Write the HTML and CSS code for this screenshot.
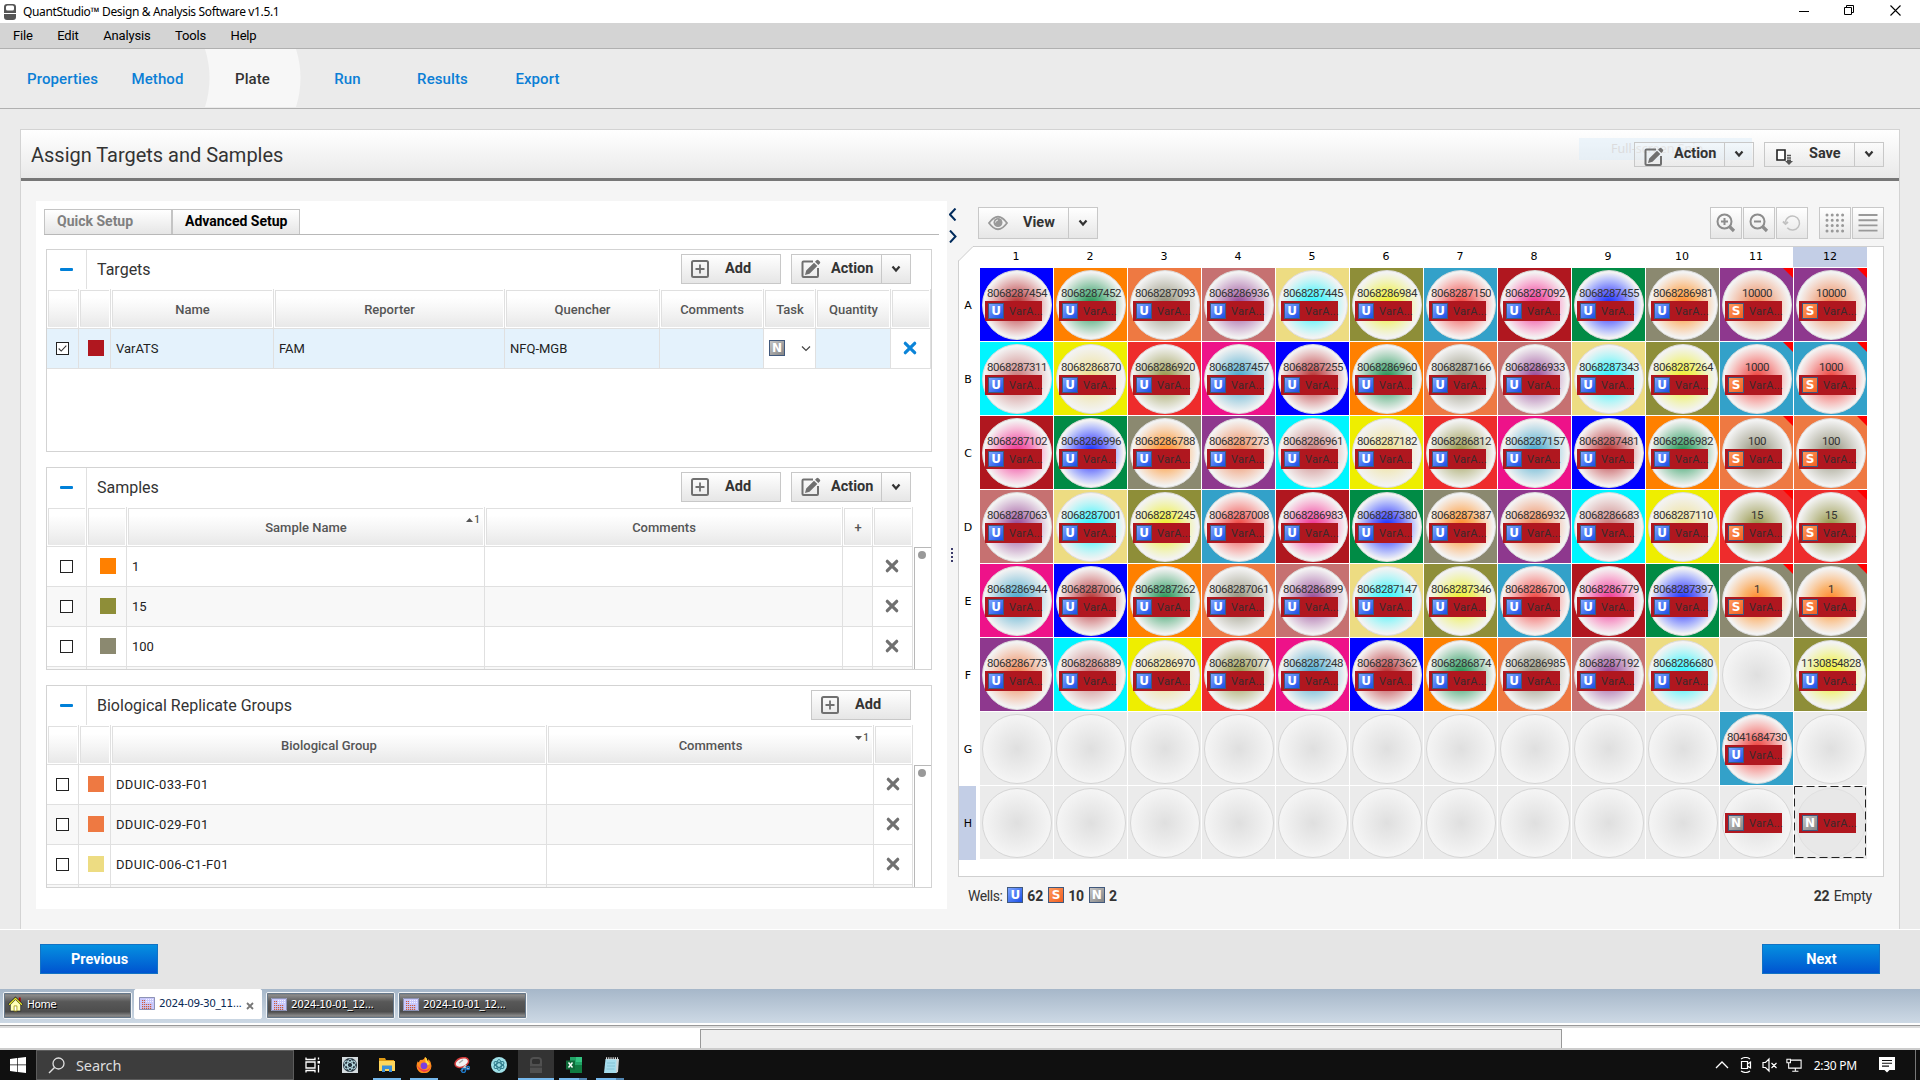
FILE: index.html
```html
<!DOCTYPE html>
<html lang="en">
<head>
<meta charset="utf-8">
<title>QuantStudio Design &amp; Analysis Software</title>
<link rel="stylesheet" href="styles.css">
</head>
<body>
<svg class="sprite" aria-hidden="true">
  <symbol id="i-add" viewBox="0 0 18 18"><rect x="1" y="1" width="16" height="16" rx="1.5" fill="none" stroke="#707070" stroke-width="2"/><path d="M4.500 9h9M9 4.500v9" stroke="#707070" stroke-width="1.800"/></symbol>
  <symbol id="i-edit" viewBox="0 0 20 20"><path d="M12 2.500H2.500a1 1 0 0 0-1 1V17a1 1 0 0 0 1 1H16a1 1 0 0 0 1-1V9" fill="none" stroke="#707070" stroke-width="2"/><path d="M4 16l1.200-4.500L13 3.700l3.300 3.300L8.500 14.800zM14 2.700l1.500-1.500q1-1 2 0l1.300 1.300q1 1 0 2L17.300 6z" fill="#707070"/></symbol>
  <symbol id="i-down" viewBox="0 0 10 8"><path d="M1.500 1.500L5 5.500l3.500-4" fill="none" stroke="#333" stroke-width="2.200"/></symbol>
  <symbol id="i-thin" viewBox="0 0 10 8"><path d="M1 1.500L5 5.500l4-4" fill="none" stroke="#444" stroke-width="1.200"/></symbol>
  <symbol id="i-x" viewBox="0 0 14 14"><path d="M2.300 2.300l9.400 9.400M11.700 2.300l-9.400 9.400" fill="none" stroke="currentColor" stroke-width="3.200" stroke-linecap="round"/></symbol>
  <symbol id="i-save" viewBox="0 0 18 18"><path d="M2 2h8v10H2z" fill="#fff" stroke="#222" stroke-width="1.600"/><path d="M12 7.500h4M12 10h4" stroke="#555" stroke-width="1.500"/><path d="M12 11.500h4v1.500h2l-4 4-4-4h2z" fill="#555"/></symbol>
  <symbol id="i-eye" viewBox="0 0 20 16"><path d="M1 8Q10-4.500 19 8 10 20.500 1 8z" fill="none" stroke="#999" stroke-width="1.800"/><circle cx="10" cy="7.500" r="4.500" fill="#999"/><path d="M7.500 7.500Q7.700 5 10 5" fill="none" stroke="#eee"/></symbol>
  <symbol id="i-zin" viewBox="0 0 20 20"><circle cx="8.500" cy="8.500" r="7" fill="none" stroke="#8c8c8c" stroke-width="2"/><path d="M5 8.500h7M8.500 5v7" stroke="#8c8c8c" stroke-width="2"/><path d="M13 13l5 5" stroke="#8c8c8c" stroke-width="3.200"/></symbol>
  <symbol id="i-zout" viewBox="0 0 20 20"><circle cx="8.500" cy="8.500" r="7" fill="none" stroke="#8c8c8c" stroke-width="2"/><path d="M5 8.500h7" stroke="#8c8c8c" stroke-width="2"/><path d="M13 13l5 5" stroke="#8c8c8c" stroke-width="3.200"/></symbol>
  <symbol id="i-reset" viewBox="0 0 20 20"><path d="M3.500 9.500a7 7 0 1 1 1.800 5.200" fill="none" stroke="#c0c0c0" stroke-width="1.500"/><path d="M1 8.500l2.500 2.500L6 9" fill="none" stroke="#c0c0c0" stroke-width="2"/></symbol>
  <symbol id="i-dots" viewBox="0 0 20 20"><path d="M2 2h17M2 7.300h17M2 12.600h17M2 17.900h17" stroke="#999" stroke-width="3" stroke-dasharray="0 5.200" stroke-linecap="round"/></symbol>
  <symbol id="i-lines" viewBox="0 0 20 20"><path d="M.5 2h19M.5 7.200h19M.5 12.400h19M.5 17.600h19" stroke="#999" stroke-width="1.900"/></symbol>
  <symbol id="i-plate" viewBox="0 0 16 13"><path d="M0 0h16v13H0z" fill="#c9c8fb"/><path d="M.5.500h15v12H.5z" fill="none" stroke="#8d93b5"/><path d="M3 3.500h3M3 5.500h3M3 7.500h10M3 9.500h10M3 11.300h10" stroke="#cc5a3c" stroke-width="1.200" stroke-dasharray="1.200 .8"/><path d="M7 2.500h8M7 4.500h8" stroke="#f4f4ff" stroke-dasharray="1 1"/></symbol>
</svg>

<header class="titlebar">
  <svg class="app-icon" viewBox="0 0 12 16"><rect width="12" height="16" rx="3" fill="#555"/><rect x="2" y="1.500" width="8" height="5" rx="1.500" fill="#fff"/><path d="M0 9.500h12" stroke="#fff"/></svg>
  <span class="app-name">QuantStudio™ Design &amp; Analysis Software v1.5.1</span>
  <div class="win-controls">
    <svg viewBox="0 0 11 11"><path d="M1 6.500h10" stroke="#000"/></svg>
    <svg viewBox="0 0 11 11"><path d="M.5 2.500h7v7h-7zM2.500 2.500v-2h7v7h-2" fill="none" stroke="#000"/></svg>
    <svg viewBox="0 0 11 11"><path d="M.5.500l10 10M10.500.5l-10 10" stroke="#000" stroke-width="1.100"/></svg>
  </div>
</header>
<nav class="menubar"><span>File</span><span>Edit</span><span>Analysis</span><span>Tools</span><span>Help</span></nav>
<nav class="steps">
  <svg class="step-shape" viewBox="0 0 96 58"><path d="M0 0h91q9 29 0 58H0q9-29 0-58z" fill="#f7f7f7"/></svg>
  <span>Properties</span><span>Method</span><span class="current">Plate</span><span>Run</span><span>Results</span><span>Export</span>
</nav>

<main class="page">
  <section class="panel">
    <div class="panel-head">
      <h1>Assign Targets and Samples</h1>
      <div class="snip">Full-screen Snip</div>
      <div class="btn split short"><span class="main"><svg class="ic20"><use href="#i-edit"/></svg><b>Action</b></span><span class="drop"><svg><use href="#i-down"/></svg></span></div>
      <div class="btn split short"><span class="main"><svg class="ic18"><use href="#i-save"/></svg><b class="save">Save</b></span><span class="drop"><svg><use href="#i-down"/></svg></span></div>
    </div>
    <div class="panel-body">
      <div class="setup">
        <div class="tabs"><span class="tab off">Quick Setup</span><span class="tab on">Advanced Setup</span></div>

        <section class="box targets">
          <div class="box-head"><span class="collapse"><i></i></span><h2>Targets</h2>
            <div class="btn add"><svg class="ic18"><use href="#i-add"/></svg><b>Add</b></div>
            <div class="btn split"><span class="main"><svg class="ic20"><use href="#i-edit"/></svg><b>Action</b></span><span class="drop"><svg><use href="#i-down"/></svg></span></div>
          </div>
          <div class="row th"><span></span><span></span><span>Name</span><span>Reporter</span><span>Quencher</span><span>Comments</span><span>Task</span><span>Quantity</span><span></span></div>
          <div class="row selected"><span class="c"><i class="check"><svg viewBox="0 0 13 13"><path d="M2 6.500l3 3 6-6.500" fill="none" stroke="#333" stroke-width="1.300"/></svg></i></span><span class="c sw"><i class="swatch crimson"></i></span><span>VarATS</span><span>FAM</span><span>NFQ-MGB</span><span></span><span class="task"><i class="tk n">N</i><svg><use href="#i-thin"/></svg></span><span></span><span class="c white"><svg class="x blue-x"><use href="#i-x"/></svg></span></div>
        </section>

        <section class="box samples">
          <div class="box-head"><span class="collapse"><i></i></span><h2>Samples</h2>
            <div class="btn add"><svg class="ic18"><use href="#i-add"/></svg><b>Add</b></div>
            <div class="btn split"><span class="main"><svg class="ic20"><use href="#i-edit"/></svg><b>Action</b></span><span class="drop"><svg><use href="#i-down"/></svg></span></div>
          </div>
          <div class="row th"><span></span><span></span><span>Sample Name<em class="sort"><svg viewBox="0 0 7 4"><path d="M0 4L3.500 0 7 4z" fill="#555"/></svg>1</em></span><span>Comments</span><span>+</span><span></span></div>
          <div class="scroller"><div class="rows">
            <div class="row"><span class="c"><i class="check"></i></span><span class="c"><i class="swatch orange"></i></span><span>1</span><span></span><span></span><span class="c"><svg class="x"><use href="#i-x"/></svg></span></div>
            <div class="row alt"><span class="c"><i class="check"></i></span><span class="c"><i class="swatch olive"></i></span><span>15</span><span></span><span></span><span class="c"><svg class="x"><use href="#i-x"/></svg></span></div>
            <div class="row"><span class="c"><i class="check"></i></span><span class="c"><i class="swatch gray"></i></span><span>100</span><span></span><span></span><span class="c"><svg class="x"><use href="#i-x"/></svg></span></div>
            <div class="row alt stub"><span></span><span></span><span></span><span></span><span></span><span></span></div>
          </div><div class="bar"><i></i></div></div>
        </section>

        <section class="box groups">
          <div class="box-head"><span class="collapse"><i></i></span><h2>Biological Replicate Groups</h2>
            <div class="btn add"><svg class="ic18"><use href="#i-add"/></svg><b>Add</b></div>
          </div>
          <div class="row th"><span></span><span></span><span>Biological Group</span><span>Comments<em class="sort"><svg viewBox="0 0 7 4"><path d="M0 0h7L3.500 4z" fill="#555"/></svg>1</em></span><span></span></div>
          <div class="scroller"><div class="rows">
            <div class="row"><span class="c"><i class="check"></i></span><span class="c sw"><i class="swatch coral"></i></span><span>DDUIC-033-F01</span><span></span><span class="c"><svg class="x"><use href="#i-x"/></svg></span></div>
            <div class="row alt"><span class="c"><i class="check"></i></span><span class="c sw"><i class="swatch coral"></i></span><span>DDUIC-029-F01</span><span></span><span class="c"><svg class="x"><use href="#i-x"/></svg></span></div>
            <div class="row"><span class="c"><i class="check"></i></span><span class="c sw"><i class="swatch khaki"></i></span><span>DDUIC-006-C1-F01</span><span></span><span class="c"><svg class="x"><use href="#i-x"/></svg></span></div>
            <div class="row alt stub"><span></span><span></span><span></span><span></span><span></span></div>
          </div><div class="bar"><i></i></div></div>
        </section>
      </div>

      <div class="splitter">
        <svg class="chev" viewBox="0 0 8 13"><path d="M6.500.5l-5.500 6 5.500 6" fill="none" stroke="#002b5c" stroke-width="2"/></svg>
        <svg class="chev" viewBox="0 0 8 13"><path d="M1 .5l5.500 6-5.500 6" fill="none" stroke="#002b5c" stroke-width="2"/></svg>
        <svg class="grip" viewBox="0 0 2 14"><path d="M1 0v14" stroke="#3b3b6b" stroke-width="2" stroke-dasharray="2 2"/></svg>
      </div>

      <div class="plate">
        <div class="toolbar">
          <div class="btn split tall"><span class="main"><svg class="eye"><use href="#i-eye"/></svg><b class="view">View</b></span><span class="drop"><svg><use href="#i-down"/></svg></span></div>
          <div class="tools">
            <div class="btn sq"><svg><use href="#i-zin"/></svg></div><div class="btn sq"><svg><use href="#i-zout"/></svg></div><div class="btn sq"><svg><use href="#i-reset"/></svg></div>
            <div class="btn sq gap"><svg><use href="#i-dots"/></svg></div><div class="btn sq"><svg><use href="#i-lines"/></svg></div>
          </div>
        </div>
        <div class="plate-card">
          <svg class="corner" viewBox="0 0 16 16"><path d="M0 0h16L0 15z" fill="#f5f5f5"/><path d="M.5 15.500v-.5L15 .5h1" fill="none" stroke="#ccc"/></svg>
          <div class="col-labels" id="cols"></div>
          <div class="plate-main">
            <div class="row-labels" id="rows"></div>
            <div class="wells" id="wells"></div>
          </div>
        </div>
        <div class="legend"><span class="lw">Wells:</span><i class="tk u">U</i><b>62</b><i class="tk s">S</i><b>10</b><i class="tk n">N</i><b>2</b><span class="empty-count"><b>22</b> Empty</span></div>
      </div>
    </div>
  </section>
</main>

<footer class="actions"><div class="primary">Previous</div><div class="primary">Next</div></footer>
<div class="filetabs">
  <div class="ftab home"><svg viewBox="0 0 16 16"><path d="M11.500 1h2v5l-2-2z" fill="#a00"/><path d="M2.500 8L8 2.500 13.500 8v7.500h-11z" fill="#ffffb8" stroke="#222" stroke-width=".7"/><path d="M.8 9L8 1.800 15.200 9" fill="none" stroke="#222" stroke-width="2.600"/><path d="M1.200 8.800L8 2l6.800 6.800" fill="none" stroke="#e8e82a" stroke-width="1.500"/><path d="M6.500 10h3v5.500h-3z" fill="#fff" stroke="#998e00" stroke-width=".8"/></svg>Home</div>
  <div class="ftab active"><svg class="pl"><use href="#i-plate"/></svg>2024-09-30_11...<svg class="close" viewBox="0 0 8 8"><path d="M1 1l6 6M7 1L1 7" stroke="#777" stroke-width="1.800"/></svg></div>
  <div class="ftab"><svg class="pl"><use href="#i-plate"/></svg>2024-10-01_12...</div>
  <div class="ftab"><svg class="pl"><use href="#i-plate"/></svg>2024-10-01_12...</div>
</div>
<div class="status"><div class="status-box"></div></div>

<div class="taskbar">
  <div class="start"><svg viewBox="0 0 16 16"><path d="M0 2l7-1v6.500H0zM7.700.9L16 0v7.500H7.700zM0 8.300h7V15l-7-1zM7.700 8.300H16V16l-8.300-1z" fill="#fff"/></svg></div>
  <div class="search"><svg viewBox="0 0 17 17"><circle cx="10.500" cy="6.500" r="5.500" fill="none" stroke="#e0e0e0" stroke-width="1.300"/><path d="M6.500 10.500L1 16" stroke="#e0e0e0" stroke-width="1.400"/></svg>Search</div>
  <div class="apps">
    <div class="app"><svg viewBox="0 0 16 16"><path d="M1 .5v2h9v-2M1 15.500v-2h9v2M1 5h9v6H1zM13.500.500v2M13.500 8v7.500" fill="none" stroke="#fff" stroke-width="1.300"/><path d="M12.500 4h2.500v2.500h-2.500z" fill="#fff"/></svg></div>
    <div class="app"><svg viewBox="0 0 16 16"><path d="M0 0h16v16H0z" fill="#d5dde0"/><circle cx="8" cy="8" r="7" fill="#23313c"/><g fill="none" stroke="#b9dde4"><ellipse cx="8" cy="8" rx="6" ry="2.500" transform="rotate(30 8 8)"/><ellipse cx="8" cy="8" rx="6" ry="2.500" transform="rotate(90 8 8)"/><ellipse cx="8" cy="8" rx="6" ry="2.500" transform="rotate(150 8 8)"/></g></svg></div>
    <div class="app run"><svg viewBox="0 0 16 16"><path d="M0 1h6l1 2h8v3H0z" fill="#e09a14"/><path d="M0 4h16v10H0z" fill="#ffd65c"/><path d="M3 15V8.500h10V15h-3v-3H6v3z" fill="#3c8fd8"/></svg></div>
    <div class="app run"><svg viewBox="0 0 16 16"><path d="M2 4q0 2 1 1 1-3 3-2 2 0 3-3 2 1 2.500 4 1-.5 1-2 3 3 3 7a7 6.800 0 0 1-15 0Q.5 6 2 4z" fill="#ff8a1c"/><path d="M9 0q2 1 2.500 4l2.500 3-4 2z" fill="#ffdd3d"/><path d="M1 8q1 5 7 7 6-1 7-6-1 3-5 4-6 0-9-5z" fill="#f23a4e"/><circle cx="8" cy="8.800" r="3.400" fill="#7a3ee0"/></svg></div>
    <div class="app"><svg viewBox="0 0 16 16"><ellipse cx="8" cy="5.500" rx="7" ry="4.500" fill="#f3f3f3" stroke="#d23b3b" stroke-width="1.500" transform="rotate(-20 8 6)"/><path d="M5 6l4-3" stroke="#aaa" stroke-width="1.500"/><path d="M7 14l5-6M15 12l-5-2" stroke="#ccc" stroke-width="1.500"/><circle cx="9.500" cy="13.500" r="2" fill="none" stroke="#1c78c8" stroke-width="1.400"/><circle cx="14" cy="11" r="1.600" fill="none" stroke="#1c78c8" stroke-width="1.400"/></svg></div>
    <div class="app"><svg viewBox="0 0 16 16"><circle cx="8" cy="8" r="8" fill="#9fe0e8"/><g fill="none" stroke="#2f7c8c"><ellipse cx="8" cy="8" rx="5.500" ry="2.300" transform="rotate(30 8 8)"/><ellipse cx="8" cy="8" rx="5.500" ry="2.300" transform="rotate(90 8 8)"/><ellipse cx="8" cy="8" rx="5.500" ry="2.300" transform="rotate(150 8 8)"/></g></svg></div>
    <div class="app run focus"><svg viewBox="0 0 16 16"><path d="M2 16V4q0-4 4-4h4q4 0 4 4v12z" fill="#505050"/><rect x="4" y="2" width="8" height="5" rx="1.500" fill="#303030"/><path d="M2 10h12" stroke="#303030"/></svg></div>
    <div class="app run multi"><svg viewBox="0 0 16 16"><path d="M4 0h12v16H4z" fill="#21a366"/><path d="M10 0h6v5h-6z" fill="#33c481"/><path d="M4 8h12v8H4z" fill="#107c41"/><path d="M0 3.500h9v9H0z" fill="#0e6a38"/><path d="M2.500 5.500l4 5M6.500 5.500l-4 5" stroke="#fff" stroke-width="1.400"/></svg></div>
    <div class="app run multi"><svg viewBox="0 0 16 16"><path d="M2.500 2H15l-1.500 14H1z" fill="#a5dcec"/><path d="M13.500 2H16l-1 13-2 1z" fill="#cfd4d6"/><path d="M3 1.500h12" stroke="#ddd" stroke-width="2.500" stroke-dasharray="1.200 1"/><path d="M4 6h8M4 9h8M3.500 12h8" stroke="#7fbdd0" stroke-width=".8"/></svg></div>
  </div>
  <div class="tray">
    <svg viewBox="0 0 16 16"><path d="M2 11l6-6 6 6" fill="none" stroke="#fff" stroke-width="1.300"/></svg>
    <svg viewBox="0 0 16 16"><path d="M3.500 4.500h6v7h-6zM9.500 7l3-2v6l-3-2M3 2q5-3 9 0M3 14q5 3 9 0" fill="none" stroke="#fff" stroke-width="1.200"/></svg>
    <svg viewBox="0 0 16 16"><path d="M1 5.500h2.500L7 2v12L3.500 10.500H1zM9.500 6l5 5M14.500 6l-5 5" fill="none" stroke="#fff" stroke-width="1.200"/></svg>
    <svg viewBox="0 0 18 16"><path d="M5 2.500h12v9H3V7M7 15h7M10.500 11.500V15M1 1.500h4v4H1zM3 5.500V8" fill="none" stroke="#fff" stroke-width="1.200"/></svg>
    <span class="clock">2:30 PM</span>
    <svg class="notif" viewBox="0 0 16 16"><path d="M0 0h16v13h-5.500L8 15.500 5.500 13H0z" fill="#fff"/><path d="M3 3.500h10M3 6.300h10M3 9.100h7" stroke="#111" stroke-width="1.100"/></svg>
    <i class="peek"></i>
  </div>
</div>
<script src="script.js"></script>
</body>
</html>
```
FILE: styles.css
```css
* { box-sizing: border-box; }
body { margin: 0; width: 1920px; height: 1080px; overflow: hidden; display: flex; flex-direction: column; background: #ebebeb; font-family: Roboto, "Liberation Sans", sans-serif; font-size: 13px; color: #333; }
i, em { font-style: normal; }
h1, h2 { margin: 0; font-weight: 400; }
svg { display: block; flex: none; }
.sprite { position: absolute; width: 0; height: 0; }

.titlebar { height: 23px; flex: none; background: #fff; display: flex; align-items: center; padding-left: 4px; color: #000; }
.app-icon { width: 12px; height: 16px; margin-right: 7px; }
.app-name { letter-spacing: -.36px; font-family: "Noto Sans", sans-serif; font-size: 12px; }
.win-controls { margin-left: auto; display: flex; gap: 35px; padding-right: 19px; margin-top: -3px; }
.win-controls svg { width: 11px; height: 11px; }

.menubar { height: 26px; flex: none; background: #d4d4d4; border-bottom: 1px solid #b0b0b0; display: flex; align-items: center; gap: 24.500px; padding-left: 13px; color: #000; font-size: 13px; letter-spacing: -.16px; }

.steps { height: 60px; flex: none; border-bottom: 1px solid #b0b0b0; display: grid; grid-template-columns: repeat(6, 95px); padding-left: 15px; align-items: center; justify-items: center; position: relative; font-size: 15px; font-weight: 500; color: #0b7fd6; letter-spacing: .1px; }
.steps span { position: relative; }
.steps .current { color: #333; }
.step-shape { position: absolute; left: 205px; top: 0; width: 96px; height: 58px; }

.page { height: 820px; flex: none; padding: 20px 20px 0; }
.panel { height: 800px; border: 1px solid #d3d3d3; border-bottom: 0; background: #f5f5f5; }
.panel-head { height: 51px; border-bottom: 3px solid #777; background: linear-gradient(#fff, #e9e9e9); display: flex; align-items: center; gap: 10px; padding: 0 15px 0 10px; }
.panel-head h1 { font-size: 20px; margin-right: auto; margin-top: 1px; letter-spacing: -.02px; }
.snip { position: absolute; left: 1579px; top: 138px; width: 173px; height: 22px; padding-left: 32px; font: 12.500px/21px "Noto Sans", sans-serif; color: #dcdcdd; background: rgba(215, 235, 250, .4); white-space: nowrap; }
.panel-body { display: flex; padding: 20px 15px 0 15px; }

.btn { height: 30px; flex: none; border: 1px solid #c8c8c8; background: linear-gradient(#fff, #e6e6e6); display: flex; align-items: center; font-size: 14.500px; color: #333; }
.btn b { font-weight: 700; margin-top: -1px; }
.add { width: 100px; padding-left: 9px; }
.add b { margin-left: 16px; }
.split { width: 120px; }
.short { height: 25px; position: relative; background: linear-gradient(rgba(255,255,255,.3), rgba(225,225,225,.3)); }
.tall { height: 32px; }
.main { width: 90px; height: 100%; border-right: 1px solid #c8c8c8; display: flex; align-items: center; padding-left: 9px; }
.main b { margin-left: 10px; font-size: 14.500px; }
.main .save { margin-left: 14px; }
.main .view { margin-left: 15px; }
.short .main svg { margin-top: 5px; }
.drop { flex: 1; display: flex; justify-content: center; }
.drop svg { width: 10px; height: 8px; }
.ic18 { width: 18px; height: 18px; }
.ic20 { width: 20px; height: 20px; }
.short .ic18 { margin-left: 1px; margin-right: 2px; }
.eye { width: 20px; height: 16px; }

.setup { width: 911px; height: 708px; background: #fff; padding: 8px 8px 0; }
.tabs { height: 26px; border-bottom: 1px solid #b8b8b8; display: flex; }
.tab { width: 128px; border: 1px solid #c4c4c4; border-bottom: 0; background: linear-gradient(#fff, #e6e6e6); font-weight: 700; font-size: 14px; line-height: 22px; padding-left: 12px; white-space: nowrap; }
.tab.off { color: #808080; }
.tab.on { color: #000; }

.box { width: 886px; height: 203px; margin: 14px 0 0 2px; border: 1px solid #d3d3d3; background: #fff; overflow: hidden; }
.box + .box { margin-top: 15px; }
.box-head { height: 39px; display: flex; align-items: center; gap: 10px; padding-right: 20px; }
.box-head .btn { margin-top: -1px; }
.collapse { width: 40px; height: 100%; border-right: 1px solid #e0e0e0; display: flex; align-items: center; justify-content: center; }
.collapse i { width: 13px; height: 3px; background: #0080d8; border-radius: 1px; }
.box-head h2 { font-size: 16px; margin-right: auto; letter-spacing: 0; }
.row { display: grid; height: 40px; border-bottom: 1px solid #e0e0e0; }
.row > span { border-right: 1px solid #e0e0e0; display: flex; align-items: center; padding: 0 0 1px 5px; color: #222; position: relative; }
.targets .row { grid-template-columns: 32px 32px 163px 231px 155px 104px 52px 75px 40px; }
.samples .row { grid-template-columns: 40px 40px 358px 358px 30px 40px; }
.groups .row { grid-template-columns: 32px 32px 436px 327px 39px; }
.groups .rows { letter-spacing: .32px; }
.samples .th, .groups .th { width: 866px; }
.row.th > span { justify-content: center; padding: 2px 0 0 1px; font-weight: 500; color: #555; background: linear-gradient(#e0e0e0, #e0e0e0) 1px 1px / calc(100% - 2px) 1px no-repeat, linear-gradient(#e0e0e0, #e0e0e0) 1px 1px / 1px calc(100% - 3px) no-repeat, linear-gradient(#fff 20%, #f4f4f4 60%, #e8e8e8) 1px 1px / calc(100% - 2px) calc(100% - 2px) no-repeat; }
.row > .c { padding: 0 0 1px; justify-content: center; }
.row.alt > span { background: #f8f8f8; }
.row.alt > .c:last-child, .row > .white { background: #fff; }
.row.selected { background: #e4f2fc; }
.check { width: 13px; height: 13px; border: 1px solid #222; background: #fff; }
.check svg { width: 11px; height: 11px; }
.swatch { width: 16px; height: 16px; margin-left: 2px; }
.x { width: 14px; height: 14px; color: #707070; margin-right: 1px; }
.blue-x { color: #0b84d8; }
.row > .task { background: #fff; gap: 16px; }
.task svg { width: 10px; height: 8px; margin-top: 2px; }
.sort { position: absolute; right: 4px; top: 7px; display: flex; align-items: center; gap: 1px; font-size: 10px; }
.sort svg { width: 7px; height: 4px; }
.scroller { display: flex; height: 123px; }
.rows { width: 866px; overflow: hidden; }
.bar { flex: 1; border: solid #b8b8b8; border-width: 1px 0 0 1px; padding: 3px 0 0 3px; margin-left: 1px; }
.bar i { display: block; width: 8px; height: 8px; border-radius: 50%; background: #999; }

.tk { width: 16px; height: 16px; flex: none; border: 1px solid #40587c; color: #fff; font: 700 12px/14px "DejaVu Sans", sans-serif; text-align: center; letter-spacing: 0; }
.tk.u { background: linear-gradient(135deg, #7ea6ff, #1a4fe8); }
.tk.s { background: linear-gradient(135deg, #ff9a5c, #f25f22); }
.tk.n { background: linear-gradient(135deg, #c4c4c4, #858585); }

.splitter { width: 11px; padding: 7px 0 0 2px; }
.chev { width: 8px; height: 13px; margin-bottom: 9px; }
.grip { width: 2px; height: 14px; margin: 305px 0 0 2px; }

.plate { flex: 1; padding-top: 6px; }
.toolbar { display: flex; justify-content: space-between; padding-left: 20px; }
.tools { display: flex; gap: 1px; }
.sq { width: 32px; height: 32px; justify-content: center; }
.sq svg { width: 20px; height: 20px; }
.gap { margin-left: 10px; }
.plate-card { width: 926px; height: 631px; margin-top: 7px; border: 1px solid #d0d0d0; background: #fff; position: relative; }
.corner { position: absolute; left: -1px; top: -1px; width: 16px; height: 16px; }
.col-labels { display: grid; grid-template-columns: repeat(12, 74px); height: 18px; margin: 0 0 3px 20px; font: 11px/20px "DejaVu Sans", sans-serif; color: #000; text-align: center; }
.hot { background: #c3cee6; }
.plate-main { display: flex; gap: 4px; }
.row-labels { width: 17px; display: grid; grid-template-rows: repeat(8, 74px); font: 11px/76px "DejaVu Sans", sans-serif; color: #000; text-align: center; }
.row-labels span { height: 74px; padding-left: 1px; }
.wells { display: grid; grid-template: repeat(8, 74px) / repeat(12, 74px); }
.well { width: 73px; height: 73px; background: var(--outer, #ebebeb); padding: 2px; position: relative; }
.disc { width: 70px; height: 70px; border-radius: 50%; border: 1px solid #d6d6d6; background: radial-gradient(circle, #dfdfdf, #f4f4f4 68%); display: flex; flex-direction: column; align-items: flex-start; padding: 16px 0 0 2px; }
.filled .disc { border-color: #ddd; background: radial-gradient(circle, var(--inner) 0, color-mix(in srgb, var(--inner) 55%, #f3f3f3) 30%, #f3f3f3 68%); }
.name { width: 64px; height: 14px; text-align: center; font-size: 11.500px; line-height: 12px; letter-spacing: -.45px; color: #333; white-space: nowrap; }
.tag { width: 57px; height: 20px; flex: none; background: #b0171f; display: flex; align-items: center; gap: 5px; padding-left: 3px; font-size: 11px; color: #3a2a2c; letter-spacing: .25px; }
.ntc .disc { padding-top: 24px; }
.std::after { content: ""; position: absolute; right: 0; top: 0; border: solid transparent; border-width: 0 0 10px 10px; border-top: 0; border-right: 10px solid #f00; border-left: 0; }
.marked .disc { background: #e8e8e8; border-color: #e0e0e0; }
.marquee { position: absolute; left: 0; top: 0; width: 72px; height: 72px; }
.legend { display: flex; align-items: center; margin-top: 10px; padding: 0 12px 0 10px; height: 16px; font-size: 14px; line-height: 16px; }
.legend b { font-size: 14px; margin: 1px 5px 0 4px; letter-spacing: -.15px; }
.lw { margin-right: 5px; margin-top: 1px; letter-spacing: -.45px; }
.empty-count { margin-left: auto; margin-top: 1px; letter-spacing: -.2px; }
.legend .empty-count b { margin: 0 1px 0 0; }

.actions { height: 60px; flex: none; border-top: 1px solid #fff; background: #e5e5e5; display: flex; justify-content: space-between; padding: 14px 40px 0; }
.primary { width: 118px; height: 30px; border: 1px solid #1272c4; background: linear-gradient(#0590e0, #0054d0); color: #fff; font-weight: 700; font-size: 14.500px; line-height: 29px; text-align: center; padding-left: 1px; }

.filetabs { height: 34px; flex: none; background: linear-gradient(#a6b7c9, #cdd9e5); display: flex; align-items: flex-start; padding: 3px 0 0 3px; gap: 3px; }
.ftab { width: 129px; height: 27px; border: 1px solid #f2f4f6; border-radius: 2px; outline: 1px solid #66788a; outline-offset: -2px; background: linear-gradient(#777 0, #888 10%, #585858 35%, #4d4d4d 75%, #858585 90%, #777); color: #fff; text-shadow: 1px 1px 0 #000; font: 10.500px/24px "DejaVu Sans", sans-serif; letter-spacing: -.45px; display: flex; align-items: center; gap: 4px; padding: 0 0 3px 4px; white-space: nowrap; }
.ftab.active { height: 30px; width: 128px; margin: -3px 1px 0 -1px; padding-top: 1px; background: #fff; border-color: #fff; outline: 0; color: #0b2b55; text-shadow: none; }
.home svg { width: 15px; height: 16px; }
.pl { width: 16px; height: 13px; }
.close { width: 8px; height: 8px; margin: 6px 0 0 1px; }

.status { height: 27px; flex: none; background: #fff; border-top: 2px solid #fff; border-bottom: 2px solid #ccc; padding-left: 700px; box-shadow: inset 0 1px #999, inset 0 3px #ddd; }
.status-box { width: 862px; height: 19px; margin-top: 4px; background: #efefef; border: 1px solid #999; border-width: 1px 1px 0; }

.taskbar { height: 30px; flex: none; background: #101010; display: flex; color: #fff; font-family: "Noto Sans", sans-serif; }
.start { width: 36px; display: flex; align-items: center; justify-content: center; }
.start svg { width: 16px; height: 16px; }
.search { width: 258px; border: 1px solid #5c5c5c; background: #3d3d3d; color: #ddd; font-size: 14.500px; display: flex; align-items: center; gap: 11px; padding-left: 11px; letter-spacing: -.1px; }
.search svg { width: 17px; height: 17px; }
.apps { display: flex; gap: 1.300px; }
.app { width: 36px; height: 30px; display: flex; align-items: center; justify-content: center; }
.app svg { width: 16px; height: 16px; margin-left: 1px; }
.run { background: linear-gradient(#76b9ed, #76b9ed) center bottom / 28px 2px no-repeat; }
.multi { background: linear-gradient(90deg, #76b9ed 70%, #5387b3 70%) center bottom / 28px 2px no-repeat; }
.focus { background: linear-gradient(#76b9ed, #76b9ed) center bottom / 36px 2px no-repeat, #333; }
.tray { margin-left: auto; display: flex; align-items: center; gap: 8px; }
.tray svg { width: 16px; height: 16px; }
.clock { font-size: 12px; margin-left: 4px; letter-spacing: -.25px; }
.tray .notif { margin-left: 14px; }
.peek { width: 5px; height: 30px; border-left: 1px solid #777; margin-left: 12px; }

.blue { background: #0000ff; }
.orange { background: #ff8000; }
.coral { background: #ee7942; }
.khaki { background: #eddc82; }
.olive { background: #8e8e38; }
.crimson { background: #b0171f; }
.gray { background: #8b8970; }
```
FILE: script.js
```js
const C = { blue: '#0000ff', orange: '#ff8000', coral: '#ee7942', rose: '#c67171', khaki: '#eddc82', olive: '#8e8e38', sea: '#33a1c9', crimson: '#b0171f', green: '#008b45', gray: '#8b8970', purple: '#8e388e', cyan: '#00f5ff', yellow: '#eeee00', red: '#ee2c2c', pink: '#ee1289' };
const order = Object.keys(C);
const plate = [
  { outer: 'blue', inner: 'crimson', ids: '8068287454 8068287452 8068287093 8068286936 8068287445 8068286984 8068287150 8068287092 8068287455 8068286981 10000 10000' },
  { outer: 'cyan', inner: 'rose', ids: '8068287311 8068286870 8068286920 8068287457 8068287255 8068286960 8068287166 8068286933 8068287343 8068287264 1000 1000' },
  { outer: 'crimson', inner: 'pink', ids: '8068287102 8068286996 8068286788 8068287273 8068286961 8068287182 8068286812 8068287157 8068287481 8068286982 100 100' },
  { outer: 'rose', inner: 'purple', ids: '8068287063 8068287001 8068287245 8068287008 8068286983 8068287380 8068287387 8068286932 8068286683 8068287110 15 15' },
  { outer: 'pink', inner: 'sea', ids: '8068286944 8068287006 8068287262 8068287061 8068286899 8068287147 8068287346 8068286700 8068286779 8068287397 1 1' },
  { outer: 'purple', inner: 'coral', ids: '8068286773 8068286889 8068286970 8068287077 8068287248 8068287362 8068286874 8068286985 8068287192 8068286680 - 1130854828' },
  { outer: 'blue', inner: 'blue', ids: '- - - - - - - - - - 8041684730 -' },
  { outer: 'blue', inner: 'blue', ids: '- - - - - - - - - - N N' }
];
const cycle = (name, step) => C[order[(order.indexOf(name) + step) % order.length]];
const tag = t => `<div class="tag"><i class="tk ${t.toLowerCase()}">${t}</i>VarA...</div>`;
const marquee = '<svg class="marquee" viewBox="0 0 72 72"><path d="M.5.500h71v71H.5z" fill="none" stroke="#222" stroke-dasharray="8 4"/></svg>';

let html = '';
plate.forEach((row, r) => row.ids.split(' ').forEach((id, c) => {
  if (id === '-') { html += '<div class="well"><div class="disc"></div></div>'; return; }
  if (id === 'N') { html += `<div class="well ntc${c === 11 ? ' marked' : ''}"><div class="disc">${tag('N')}</div>${c === 11 ? marquee : ''}</div>`; return; }
  const std = id.length < 6;
  const step = Math.min(c, 10);
  let outer = cycle(row.outer, step), inner = cycle(row.inner, step);
  if (r === 5 && c === 11) { outer = C.olive; inner = C.yellow; }
  if (r === 6) { outer = C.sea; inner = C.red; }
  html += `<div class="well filled${std ? ' std' : ''}" style="--outer:${outer};--inner:${inner}"><div class="disc"><div class="name">${id}</div>${tag(std ? 'S' : 'U')}</div></div>`;
}));
document.getElementById('wells').innerHTML = html;
document.getElementById('cols').innerHTML = Array.from({ length: 12 }, (_, i) => `<span${i === 11 ? ' class="hot"' : ''}>${i + 1}</span>`).join('');
document.getElementById('rows').innerHTML = [...'ABCDEFGH'].map(l => `<span${l === 'H' ? ' class="hot"' : ''}>${l}</span>`).join('');
```
